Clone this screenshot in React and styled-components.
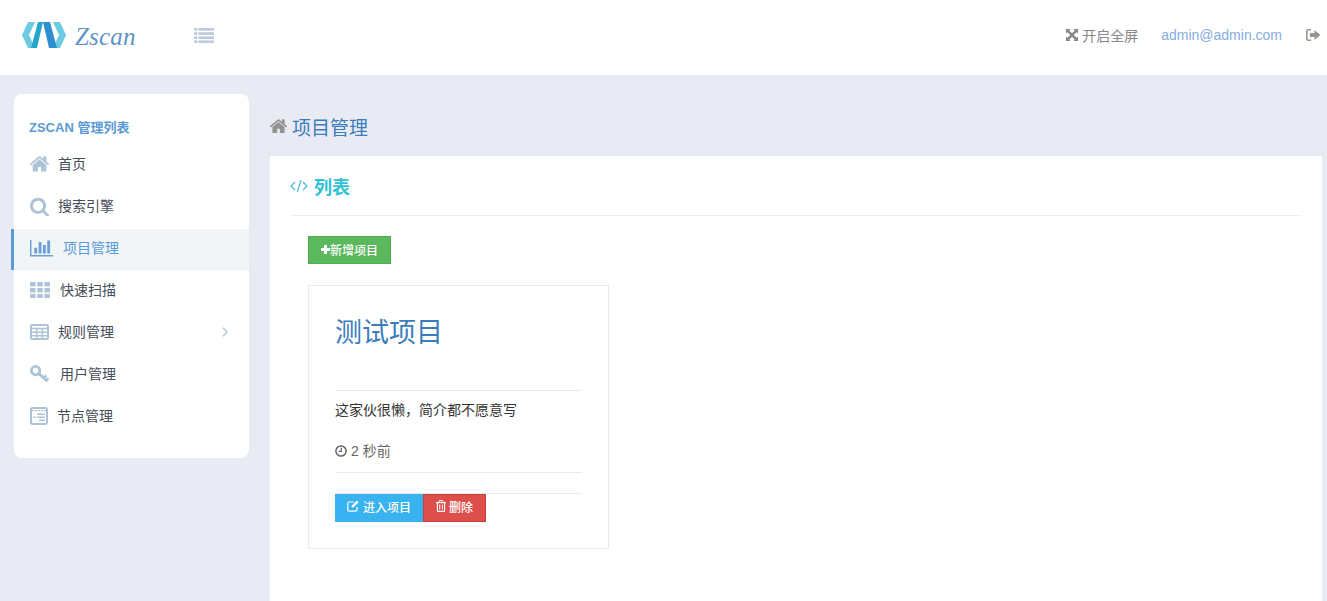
import React from 'react';
import styled, { createGlobalStyle } from 'styled-components';

const Global = createGlobalStyle`
  html, body { margin: 0; padding: 0; height: 100%; overflow: hidden; background: #e8ebf3; }
  body { font-family: "Liberation Sans", "Noto Sans CJK SC", sans-serif; font-size: 14px; color: #333; }
  * { box-sizing: border-box; }
`;

const Page = styled.div`height: 601px; overflow: hidden; display: flex; flex-direction: column;`;
const Header = styled.header`
  height: 75px; flex: none; background: #fff; display: flex; align-items: center; padding: 0 6px 5px 22px;
`;
const Brand = styled.div`display: flex; align-items: center; width: 172px;`;
const BrandName = styled.span`
  font: italic 25px "Liberation Serif", serif; color: #5f95c6; margin-left: 9px; letter-spacing: .2px; position: relative; top: 2px;
`;
const Toggle = styled.span`display: flex; color: #bccbdf;`;
const HeaderRight = styled.div`margin-left: auto; display: flex; align-items: center;`;
const FullScreen = styled.span`display: flex; align-items: center; gap: 4px; color: #888; margin-right: 23px;`;
const Email = styled.span`color: #84ade0; margin-right: 24px;`;
const Logout = styled.span`display: flex; color: #9a9490;`;

const Body = styled.div`flex: 1; display: flex; min-height: 0; padding: 0 5px 0 14px;`;
const Sidebar = styled.aside`
  width: 235px; height: 364px; flex: none; margin-top: 19px; background: #fff; border-radius: 8px; padding-top: 26px;
`;
const SideTitle = styled.div`
  font-size: 13px; font-weight: 700; line-height: 16px; color: #5b9bd5; padding-left: 15px; margin-bottom: 7px;
`;
const NavRow = styled.div`
  height: 42px; display: flex; align-items: center; padding: 0 21px 0 16px;
  color: #444d58;
  ${p => p.$active && `
    height: 41px; margin: 2px 0 -1px -3px; padding-bottom: 3px; color: #5b9bd5;
    background: #f1f5f8; border-left: 3px solid #5b9bd5;
  `}
`;
const NavIcon = styled.span`display: flex; width: ${p => p.$w}px; flex: none; color: ${p => (p.$active ? '#6c9fd6' : '#aec4d6')};`;
const NavLabel = styled.span`padding-bottom: 2px;`;
const Chevron = styled.span`margin-left: auto; display: flex; color: #aec4d6;`;

const Main = styled.main`flex: 1; margin-left: 21px; display: flex; flex-direction: column; min-width: 0;`;
const PageTitle = styled.div`
  height: 81px; flex: none; display: flex; align-items: center; gap: 5px; padding-top: 21px;
  font-size: 19px; color: #3b7dbb;
`;
const TitleIcon = styled.span`display: flex; color: #949494;`;
const Panel = styled.section`flex: 1; background: #fff; padding: 0 20px;`;
const PanelHead = styled.div`
  height: 60px; display: flex; align-items: center; gap: 6px; border-bottom: 1px solid #eceef1;
  font-size: 18px; font-weight: 700; color: #2fc2d6;
`;
const CodeIcon = styled.span`display: flex; color: #48b9dc;`;
const PanelBody = styled.div`padding: 20px 18px;`;
const Btn = styled.button`
  height: 28px; border: 1px solid ${p => p.$border}; background: ${p => p.$bg}; color: #fff;
  font: 500 12px "Liberation Sans", "Noto Sans CJK SC", sans-serif; padding: 0 0 ${p => p.$lift}px; width: ${p => p.$w}px;
  display: inline-flex; align-items: center; justify-content: center; gap: ${p => p.$gap}px;
`;
const Card = styled.article`
  width: 301px; height: 264px; margin-top: 21px; border: 1px solid #e7ebef; padding: 0 26px;
`;
const CardTitle = styled.h3`
  margin: 0; height: 105px; border-bottom: 1px solid #e7ebef; font-size: 27px; font-weight: 400; color: #3b7dbb;
  line-height: 39px; padding-top: 28px;
`;
const Desc = styled.p`margin: 0; height: 40px; line-height: 39px; color: #333;`;
const Time = styled.div`
  height: 42px; display: flex; align-items: center; gap: 4px; border-bottom: 1px solid #e7ebef; color: #666; font-size: 14px;
  padding-bottom: 2px;
`;
const TimeText = styled.span`padding-bottom: 2px;`;
const Actions = styled.div`margin-top: 20px; border-top: 1px solid #e7ebef; display: flex;`;

const Ico = ({ w, h, vb, d }) => (
  <svg width={w} height={h} viewBox={vb} fill="currentColor"><path d={d} /></svg>
);
const P = {
  home: 'M1472 992v480q0 26-19 45t-45 19h-384v-384h-256v384h-384q-26 0-45-19t-19-45v-480q0-1 .5-3t.5-3l575-474 575 474q1 2 1 6zm223-69l-62 74q-8 9-21 11h-3q-13 0-21-7l-692-577-692 577q-12 8-24 7-13-2-21-11l-62-74q-8-10-7-23.5t11-21.5l719-599q32-26 76-26t76 26l244 204v-195q0-14 9-23t23-9h192q14 0 23 9t9 23v408l219 182q10 8 11 21.5t-7 23.5z',
  search: 'M1216 832q0-185-131.5-316.5t-316.5-131.5-316.5 131.5-131.5 316.5 131.5 316.5 316.5 131.5 316.5-131.5 131.5-316.5zm512 832q0 52-38 90t-90 38q-54 0-90-38l-343-342q-179 124-399 124-143 0-273.5-55.5t-225-150-150-225-55.5-273.5 55.5-273.5 150-225 225-150 273.5-55.5 273.5 55.5 225 150 150 225 55.5 273.5q0 220-124 399l343 343q37 37 37 90z',
  bars: 'M640 896v512h-256v-512h256zm384-512v1024h-256v-1024h256zm1024 1152v128h-2048v-1536h128v1408h1920zm-640-896v768h-256v-768h256zm384-384v1152h-256v-1152h256z',
};
const HOME_VB = '97 236 1598 1300';

const Logo = () => (
  <svg width="44" height="26" viewBox="0 0 44 26">
    <polygon fill="#6ccbe3" points="0,13 6,0 13,0 7,13 13,26 6,26" />
    <polygon fill="#6ccbe3" points="44,13 38,0 31,0 37,13 31,26 38,26" />
    <polygon fill="#22a7cb" points="16,0 21,0 15,26 9,26" />
    <polygon fill="#2d8fd0" points="21,0 28,0 35,26 27,26" />
  </svg>
);
const ListIcon = () => (
  <svg width="20" height="15" viewBox="0 0 20 15" fill="currentColor">
    {[0, 4.2, 8.4, 12.4].map(y => (
      <g key={y}><rect x="0" y={y} width="3.4" height="2.7" /><rect x="4.4" y={y} width="15.6" height="2.7" /></g>
    ))}
  </svg>
);
const Grid = () => (
  <svg width="20" height="16" viewBox="0 0 20 16" fill="currentColor">
    {[0, 6, 12].map(y => [0, 7.2, 14.4].map(x => <rect key={x + '-' + y} x={x} y={y} width="5.6" height="4.4" rx=".6" />))}
  </svg>
);
const TableIcon = () => (
  <svg width="19" height="16" viewBox="0 0 19 16">
    <rect x="1" y="1" width="17" height="14" rx="1.2" fill="none" stroke="currentColor" strokeWidth="2" />
    <path d="M0 4.6h19M1 8.2h18M1 11.8h18M6.8 4v11M12.4 4v11" stroke="currentColor" strokeWidth="1.5" />
  </svg>
);
const KeyIcon = () => (
  <svg width="19" height="18" viewBox="0 0 19 18" fill="none" stroke="currentColor">
    <circle cx="5.6" cy="5.6" r="4.2" strokeWidth="2.8" />
    <path d="M8.6 8.6l9 7.6" strokeWidth="3" />
    <path d="M13.6 13l2.6-2.6M16.4 15.4l2-2" strokeWidth="2.2" />
  </svg>
);
const NewsIcon = () => (
  <svg width="18" height="18" viewBox="0 0 18 18" fill="none" stroke="currentColor">
    <rect x="1" y="1" width="16" height="16" rx="1.4" strokeWidth="2" />
    <path d="M2 3.6h14" strokeWidth="1.4" strokeDasharray="2 1" />
    <path d="M7 7.2h8M3.4 10.2h2.6M7 10.2h8M9 13.2h6" strokeWidth="1.4" />
  </svg>
);
const ExpandIcon = () => (
  <svg width="12" height="12" viewBox="0 0 12 12" fill="currentColor">
    <path d="M0 0h4.6L3.2 1.4 6 4.2 8.8 1.4 7.4 0H12v4.6L10.6 3.2 7.8 6l2.8 2.8L12 7.4V12H7.4l1.4-1.4L6 7.8 3.2 10.6 4.6 12H0V7.4l1.4 1.4L4.2 6 1.4 3.2 0 4.6z" />
  </svg>
);
const LogoutIcon = () => (
  <svg width="15" height="12" viewBox="0 0 15 12" fill="currentColor">
    <path d="M5 0v1.6H2.4q-.8 0-.8.8v7.2q0 .8.8.8H5V12H2.2Q0 12 0 9.8V2.2Q0 0 2.2 0z" />
    <path d="M8.5 1l6 5-6 5V8H4V4h4.5z" />
  </svg>
);
const Plus = () => (
  <svg width="9" height="9" viewBox="0 0 9 9" fill="currentColor"><path d="M3 0h3v3h3v3H6v3H3V6H0V3h3z" /></svg>
);
const Clock = () => (
  <svg width="12" height="12" viewBox="0 0 12 12" fill="none" stroke="currentColor" strokeWidth="1.5">
    <circle cx="6" cy="6" r="5.1" /><path d="M6.3 2.8v3.5H3.6" strokeWidth="1.3" />
  </svg>
);
const EditIcon = () => (
  <svg width="12" height="12" viewBox="0 0 12 12" fill="none" stroke="currentColor">
    <path d="M10 7v2.8q0 1.4-1.4 1.4H2.2Q.8 11.2.8 9.8V3.4Q.8 2 2.2 2H7" strokeWidth="1.2" />
    <path d="M4.6 7.6l.4-2 5-5 1.6 1.6-5 5z" fill="currentColor" stroke="none" />
  </svg>
);
const TrashIcon = () => (
  <svg width="10" height="12" viewBox="0 0 10 12" fill="none" stroke="currentColor">
    <path d="M0 2.6h10" strokeWidth="1.2" />
    <path d="M3 2.4V1.2q0-.6.6-.6h2.8q.6 0 .6.6v1.2" strokeWidth="1" />
    <path d="M1.4 3v7.4q0 1 1 1h5.2q1 0 1-1V3" strokeWidth="1.1" />
    <path d="M3.7 4.5v5M6.3 4.5v5" strokeWidth="1" />
  </svg>
);
const CodeGlyph = () => (
  <svg width="18" height="14" viewBox="0 0 18 14" fill="none" stroke="currentColor" strokeWidth="1.2">
    <path d="M5 3L1 7l4 4M13 3l4 4-4 4M11 1L7.4 13" />
  </svg>
);
const ChevronIcon = () => (
  <svg width="6" height="10" viewBox="0 0 6 10" fill="none" stroke="currentColor" strokeWidth="1.3"><path d="M1 .8L5 5 1 9.2" /></svg>
);

const nav = [
  { t: '首页', w: 28, i: <Ico w={19} h={15.5} vb={HOME_VB} d={P.home} /> },
  { t: '搜索引擎', w: 28, i: <Ico w={19} h={19} vb="64 64 1664 1664" d={P.search} /> },
  { t: '项目管理', w: 33, active: true, i: <Ico w={23} h={17} vb="0 256 2048 1408" d={P.bars} /> },
  { t: '快速扫描', w: 30, i: <Grid /> },
  { t: '规则管理', w: 28, i: <TableIcon />, more: true },
  { t: '用户管理', w: 30, i: <KeyIcon /> },
  { t: '节点管理', w: 27, i: <NewsIcon /> },
];

export default function App() {
  return (
    <Page>
      <Global />
      <Header>
        <Brand><Logo /><BrandName>Zscan</BrandName></Brand>
        <Toggle><ListIcon /></Toggle>
        <HeaderRight>
          <FullScreen><ExpandIcon />开启全屏</FullScreen>
          <Email>admin@admin.com</Email>
          <Logout><LogoutIcon /></Logout>
        </HeaderRight>
      </Header>
      <Body>
        <Sidebar>
          <SideTitle>ZSCAN 管理列表</SideTitle>
          {nav.map(n => (
            <NavRow key={n.t} $active={n.active}>
              <NavIcon $w={n.w} $active={n.active}>{n.i}</NavIcon>
              <NavLabel>{n.t}</NavLabel>
              {n.more && <Chevron><ChevronIcon /></Chevron>}
            </NavRow>
          ))}
        </Sidebar>
        <Main>
          <PageTitle><TitleIcon><Ico w={17} h={14} vb={HOME_VB} d={P.home} /></TitleIcon>项目管理</PageTitle>
          <Panel>
            <PanelHead><CodeIcon><CodeGlyph /></CodeIcon>列表</PanelHead>
            <PanelBody>
              <Btn $bg="#5cb85c" $border="#4cae4c" $w={83} $gap={0} $lift={2}><Plus />新增项目</Btn>
              <Card>
                <CardTitle>测试项目</CardTitle>
                <Desc>这家伙很懒，简介都不愿意写</Desc>
                <Time><Clock /><TimeText>2 秒前</TimeText></Time>
                <Actions>
                  <Btn $bg="#39b3f0" $border="#39b3f0" $w={88} $gap={4} $lift={4}><EditIcon />进入项目</Btn>
                  <Btn $bg="#dc4f4b" $border="#c9403c" $w={63} $gap={3} $lift={4}><TrashIcon />删除</Btn>
                </Actions>
              </Card>
            </PanelBody>
          </Panel>
        </Main>
      </Body>
    </Page>
  );
}
